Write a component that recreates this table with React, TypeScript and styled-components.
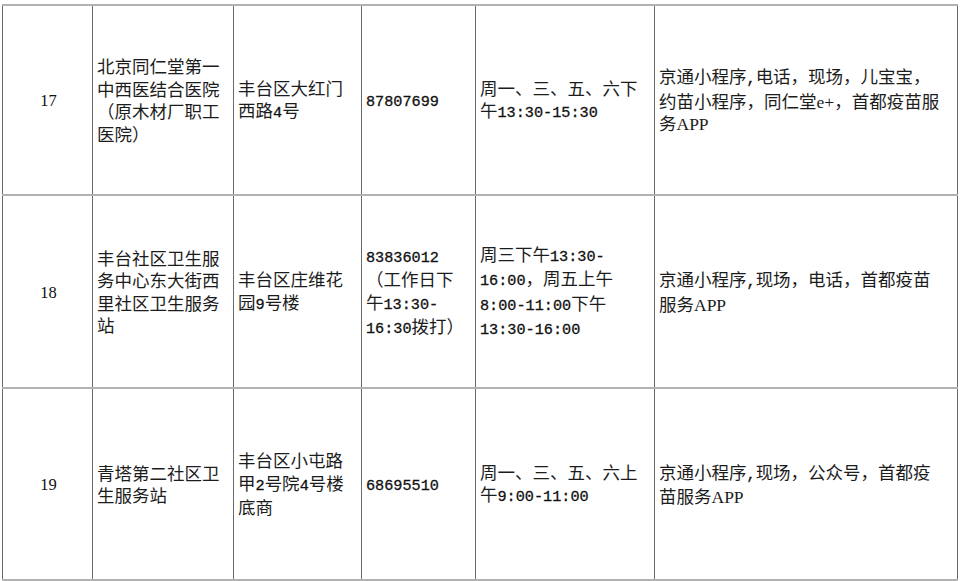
import React from "react";
import styled, { createGlobalStyle } from "styled-components";

const GlobalStyle = createGlobalStyle`
  html, body {
    margin: 0;
    padding: 0;
    background: #ffffff;
  }
`;

const Page = styled.div`
  padding: 4px 0 0 2px;
  width: 960px;
  height: 581px;
  box-sizing: border-box;
  overflow: hidden;
`;

const Table = styled.table`
  border-collapse: collapse;
  table-layout: fixed;
  width: 955px;
  color: #1c1c1c;
  font-family: "Liberation Serif", "Noto Sans CJK SC", serif;
  font-size: 17.5px;
  line-height: 22.5px;
`;

const Row = styled.tr<{ $h: number }>`
  height: ${(p) => p.$h}px;
`;

const Cell = styled.td<{ $center?: boolean }>`
  border-top: 2px solid #b2b2b2;
  border-bottom: 2px solid #b2b2b2;
  border-left: 1px solid #6a6a6a;
  border-right: 1px solid #6a6a6a;
  padding: 2px 2px 0 4px;
  vertical-align: middle;
  text-align: ${(p) => (p.$center ? "center" : "left")};
  white-space: nowrap;
  overflow: hidden;
`;

const Index = styled.span`
  font-family: "Liberation Serif", serif;
  font-size: 16.5px;
  color: #111;
`;

const Line = styled.div`
  display: block;
`;

const Num = styled.span`
  font-family: "Liberation Mono", monospace;
  font-size: 15.2px;
  color: #111;
  -webkit-text-stroke: 0.3px #111;
`;

type Entry = {
  no: string;
  name: string[];
  addr: string[];
  phone: string[];
  time: string[];
  ways: string[];
  h: number;
};

const rows: Entry[] = [
  {
    no: "17",
    h: 190,
    name: ["北京同仁堂第一", "中西医结合医院", "（原木材厂职工", "医院）"],
    addr: ["丰台区大红门", "西路4号"],
    phone: ["87807699"],
    time: ["周一、三、五、六下", "午13:30-15:30"],
    ways: ["京通小程序,电话，现场，儿宝宝，", "约苗小程序，同仁堂e+，首都疫苗服", "务APP"],
  },
  {
    no: "18",
    h: 193,
    name: ["丰台社区卫生服", "务中心东大街西", "里社区卫生服务", "站"],
    addr: ["丰台区庄维花", "园9号楼"],
    phone: ["83836012", "（工作日下", "午13:30-", "16:30拨打）"],
    time: ["周三下午13:30-", "16:00，周五上午", "8:00-11:00下午", "13:30-16:00"],
    ways: ["京通小程序,现场，电话，首都疫苗", "服务APP"],
  },
  {
    no: "19",
    h: 192,
    name: ["青塔第二社区卫", "生服务站"],
    addr: ["丰台区小屯路", "甲2号院4号楼", "底商"],
    phone: ["68695510"],
    time: ["周一、三、五、六上", "午9:00-11:00"],
    ways: ["京通小程序,现场，公众号，首都疫", "苗服务APP"],
  },
];

// digits and ascii commas in the source are half-width monospace, so wrap those runs
const renderText = (text: string) =>
  text.split(/([0-9:,\-]+)/).map((part, i) =>
    /^[0-9:,\-]+$/.test(part) ? <Num key={i}>{part}</Num> : <React.Fragment key={i}>{part}</React.Fragment>
  );

const Lines = ({ items }: { items: string[] }) => (
  <>
    {items.map((t, i) => (
      <Line key={i}>{renderText(t)}</Line>
    ))}
  </>
);

const widths = [90, 141, 128, 114, 179, 303];

const App = () => {
  return (
    <Page>
      <GlobalStyle />
      <Table>
        <colgroup>
          {widths.map((w, i) => (
            <col key={i} style={{ width: w }} />
          ))}
        </colgroup>
        <tbody>
          {rows.map((r) => (
            <Row key={r.no} $h={r.h}>
              <Cell $center>
                <Index>{r.no}</Index>
              </Cell>
              <Cell>
                <Lines items={r.name} />
              </Cell>
              <Cell>
                <Lines items={r.addr} />
              </Cell>
              <Cell>
                <Lines items={r.phone} />
              </Cell>
              <Cell>
                <Lines items={r.time} />
              </Cell>
              <Cell>
                <Lines items={r.ways} />
              </Cell>
            </Row>
          ))}
        </tbody>
      </Table>
    </Page>
  );
};

export default App;
